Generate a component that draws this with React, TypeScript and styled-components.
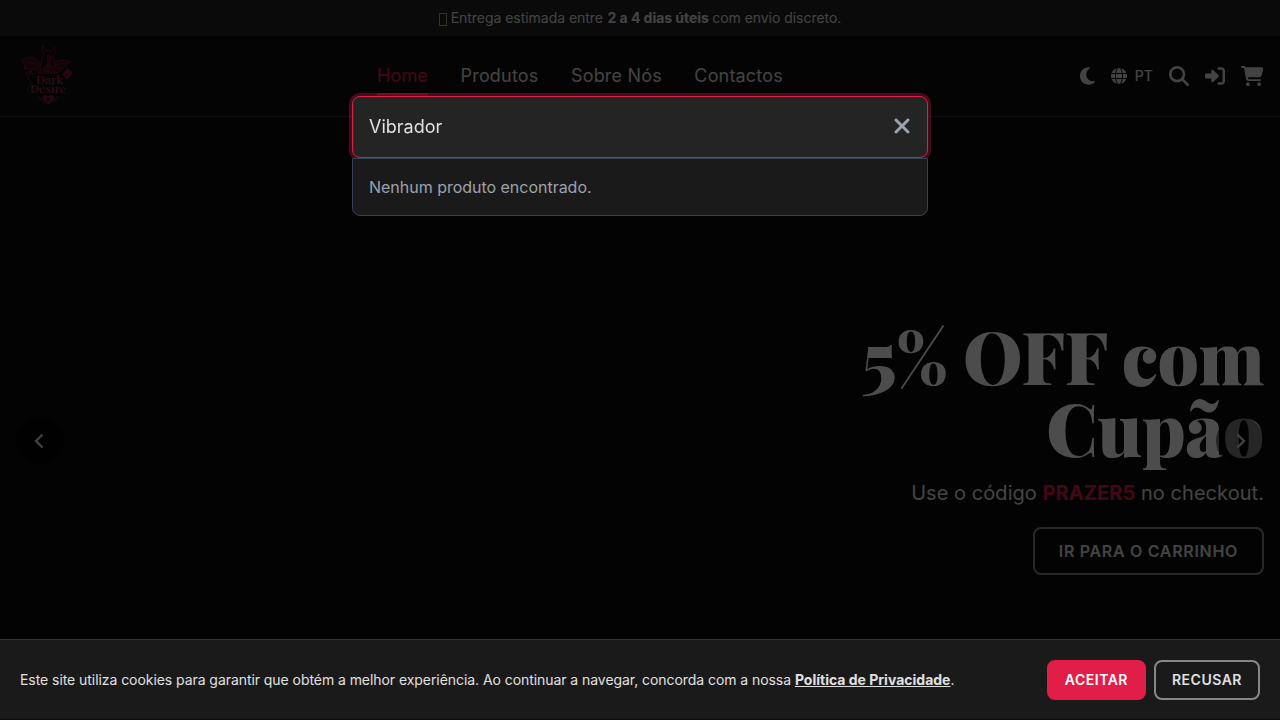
import React from "react";
import styled, { createGlobalStyle } from "styled-components";
import {
  FaMoon,
  FaGlobe,
  FaMagnifyingGlass,
  FaRightToBracket,
  FaCartShopping,
  FaXmark,
} from "react-icons/fa6";

const Global = createGlobalStyle`
  * { box-sizing: border-box; }
  body {
    margin: 0;
    height: 720px;
    overflow: hidden;
    background: #0a0a0a;
    color: #e0e0e0;
    font-family: Inter, "Liberation Sans", sans-serif;
  }
`;

const Announcement = styled.div`
  height: 36px;
  padding-bottom: 1px;
  display: flex;
  align-items: center;
  justify-content: center;
  background: #222;
  font-size: 14px;
  letter-spacing: -0.04px;
  white-space: pre;
  b { margin: 0 -0.5px 0 0.7px; }
`;

const MissingGlyph = styled.span`
  width: 8px;
  height: 13px;
  margin: 3px 4px 0 0;
  border: 1px solid #b0a078;
`;

const Header = styled.header`
  height: 81px;
  padding: 0 16px;
  display: flex;
  align-items: center;
  justify-content: space-between;
  background: #0f0f0f;
  border-bottom: 1px solid #27273c;
`;

const Brand = styled.a`
  display: flex;
  width: 60px;
  height: 60px;
`;

const Nav = styled.nav`
  display: flex;
  gap: 32.5px;
  margin-left: 4px;
`;

const NavLink = styled.a<{ $active?: boolean }>`
  padding: 7px 0 5px;
  font-size: 18px;
  line-height: 24px;
  letter-spacing: 0.18px;
  color: ${(p) => (p.$active ? "#e11d48" : "#e0e0e0")};
  border-bottom: 2px solid ${(p) => (p.$active ? "#e11d48" : "transparent")};
`;

const Tools = styled.div`
  display: flex;
  align-items: center;
  gap: 16px;
  margin-right: 0.6px;
  padding-bottom: 1px;
`;

const Icon = styled.span<{ $width: number; $height: number }>`
  display: flex;
  flex: none;
  width: ${(p) => p.$width}px;
  height: ${(p) => p.$height}px;
  svg { width: 100%; height: 100%; }
`;

const Language = styled.span`
  display: flex;
  align-items: center;
  gap: 8px;
  font-size: 14px;
  font-weight: 500;
`;

const Hero = styled.section`
  position: relative;
  height: 603px;
  padding: 202px 16px 0;
  display: flex;
  flex-direction: column;
  align-items: flex-end;
  text-align: right;
  background: #0a0a0a;
`;

const HeroTitle = styled.h1`
  margin: 0;
  font-family: "Playfair Display", "Liberation Serif", serif;
  font-size: 72px;
  font-weight: 900;
  line-height: 72px;
  letter-spacing: -0.5px;
  color: #fff;
`;

const HeroText = styled.p`
  margin: 14px 0 0;
  font-size: 20px;
  line-height: 32px;
  letter-spacing: 0.05px;
  b { color: #e11d48; }
`;

const OutlineButton = styled.button<{ $small?: boolean }>`
  height: ${(p) => (p.$small ? "40px" : "48px")};
  padding: ${(p) => (p.$small ? "0 16px 1px" : "0 24px")};
  background: transparent;
  border: 2px solid #888;
  border-radius: 8px;
  color: #e0e0e0;
  font: 600 ${(p) => (p.$small ? "14px" : "16px")} Inter, sans-serif;
  letter-spacing: ${(p) => (p.$small ? "0.5px" : "0.69px")};
`;

const HeroButton = styled(OutlineButton)`
  margin-top: 18px;
`;

const Arrow = styled.button<{ $side: "left" | "right" }>`
  position: absolute;
  top: 300px;
  ${(p) => p.$side}: 16px;
  width: 48px;
  height: 48px;
  padding: 0;
  display: flex;
  align-items: center;
  justify-content: center;
  border: 0;
  border-radius: 50%;
  background: rgba(0, 0, 0, 0.5);
`;

const Overlay = styled.div`
  position: fixed;
  inset: 0;
  padding-top: 96px;
  display: flex;
  justify-content: center;
  align-items: flex-start;
  background: rgba(0, 0, 0, 0.7);
`;

const SearchPanel = styled.div`
  width: 576px;
`;

const SearchField = styled.div`
  height: 62px;
  padding: 0 16px 2px;
  display: flex;
  align-items: center;
  justify-content: space-between;
  background: #242424;
  border: 1px solid #e11d48;
  border-radius: 8px;
  box-shadow: 0 0 0 3px rgba(225, 29, 72, 0.3);
  font-size: 18px;
  svg { color: #9ca3af; }
`;

const Results = styled.div`
  position: relative;
  height: 58px;
  padding: 0 16px;
  display: flex;
  align-items: center;
  background: #1a1a1a;
  border: 1px solid #334155;
  border-radius: 0 0 8px 8px;
  color: #9ca3af;
  font-size: 16px;
  letter-spacing: -0.02px;
`;

const CookieBar = styled.aside`
  position: fixed;
  inset: auto 0 0;
  height: 81px;
  padding: 1px 20px 0;
  display: flex;
  align-items: center;
  justify-content: space-between;
  background: #1a1a1a;
  border-top: 1px solid #333;
  border-bottom: 1px solid #160b11;
  font-size: 14px;
`;

const CookieText = styled.span`
  padding-bottom: 2px;
  letter-spacing: -0.06px;
`;

const PolicyLink = styled.a`
  font-weight: 700;
  letter-spacing: 0;
  text-decoration: underline;
`;

const Actions = styled.div`
  display: flex;
  gap: 8px;
`;

const AcceptButton = styled(OutlineButton)`
  background: #e11d48;
  border-color: #e11d48;
  color: #fff;
`;

const Logo = () => (
  <svg width="60" height="60" viewBox="0 0 60 60" fill="none" stroke="#8c1f3d" strokeWidth="0.7">
    <path fill="#3c0d1a" d="M25 18 C20 11 12 9 5 15 C8 17 9 20 9 24 C12 21 14 22 15 26 C17 22 20 22 22 27 L26 27 Z" />
    <path fill="#3c0d1a" d="M37 18 C41 13 48 14 55 16 L50 18 C51 20 49 22 47 22 C46 25 43 25 42 27 L38 27Z" />
    <path d="M25 19 L10 16 M25 20 L15 24 M38 19 L50 17 M38 21 L46 23" strokeWidth="0.4" />
    <path fill="#1c070d" d="M24 27 C26 20 24 14 28 8 C25 6 25 2 27 0 C28 5 31 5 34 5 C37 4 38 3 38 1 C40 5 39 8 36 10 C40 17 37 21 38 27Z" />
    <path fill="#5c1529" stroke="none" d="M32 8 C36 8 36 12 35 15 C34 18 36 20 38 22 C39 25 36 27 32 27 L27 26 C24 24 28 21 31 18 C32 15 30 12 32 8Z" />
    <path d="M31 22 C33 25 36 24 38 22 M32 12 L35 13" stroke="#1c070d" />
    <path d="M18 29 C12 22 6 29 12 29 C17 29 16 25 12 26 M11 30 L13 34" />
    <path fill="#7c1733" d="M51 26 C48 22 54 22 52 25 C57 23 57 29 51 33 C46 29 47 24 51 26Z" />
    <path d="M51 27 L51 30" stroke="#0d0d0d" />
    <g fill="#b32a50" stroke="none" fontFamily="'Playfair Display', 'Liberation Serif', serif" fontWeight="500">
      <text x="20" y="38" fontSize="12" textLength="27" lengthAdjust="spacingAndGlyphs">Dark</text>
      <text x="14" y="47" fontSize="12" textLength="36" lengthAdjust="spacingAndGlyphs">Desire</text>
    </g>
    <path d="M17 36 C13 38 10 44 13 46 M23 50 C23 55 27 57 31 58 C38 56 42 53 42 50 M24 52 L29 56 M40 52 L35 56" />
    <path fill="#7c1733" d="M32 51 C29 48 25 50 28 54 L32 57.5 L37 54 C40 50 35 48 32 51Z" />
    <path d="M32 52 L32 55" stroke="#0d0d0d" strokeWidth="1.4" />
  </svg>
);

const Chevron = ({ d }: { d: string }) => (
  <svg width="16" height="20" viewBox="0 0 16 20" fill="none" stroke="#e0e0e0" strokeWidth="2.3">
    <path d={d} />
  </svg>
);

export default function App() {
  return (
    <>
      <Global />
      <Announcement>
        <MissingGlyph />
        <span>Entrega estimada entre <b>2 a 4 dias úteis</b> com envio discreto.</span>
      </Announcement>
      <Header>
        <Brand><Logo /></Brand>
        <Nav>
          <NavLink $active>Home</NavLink>
          <NavLink>Produtos</NavLink>
          <NavLink>Sobre Nós</NavLink>
          <NavLink>Contactos</NavLink>
        </Nav>
        <Tools>
          <Icon $width={15} $height={20}><FaMoon /></Icon>
          <Language><Icon $width={16} $height={16}><FaGlobe /></Icon>PT</Language>
          <Icon $width={20} $height={20}><FaMagnifyingGlass /></Icon>
          <Icon $width={20} $height={20}><FaRightToBracket /></Icon>
          <Icon $width={22.5} $height={20}><FaCartShopping /></Icon>
        </Tools>
      </Header>
      <Hero>
        <HeroTitle>5% OFF com<br />Cupão</HeroTitle>
        <HeroText>Use o código <b>PRAZER5</b> no checkout.</HeroText>
        <HeroButton>IR PARA O CARRINHO</HeroButton>
        <Arrow $side="left"><Chevron d="M10.5 3.5 L4 10 L10.5 16.5" /></Arrow>
        <Arrow $side="right"><Chevron d="M5.5 3.5 L12 10 L5.5 16.5" /></Arrow>
      </Hero>
      <Overlay>
        <SearchPanel>
          <SearchField>
            Vibrador
            <Icon $width={18} $height={24}><FaXmark /></Icon>
          </SearchField>
          <Results>Nenhum produto encontrado.</Results>
        </SearchPanel>
      </Overlay>
      <CookieBar>
        <CookieText>
          Este site utiliza cookies para garantir que obtém a melhor experiência. Ao continuar a navegar, concorda com a nossa{" "}
          <PolicyLink>Política de Privacidade</PolicyLink>.
        </CookieText>
        <Actions>
          <AcceptButton $small>ACEITAR</AcceptButton>
          <OutlineButton $small>RECUSAR</OutlineButton>
        </Actions>
      </CookieBar>
    </>
  );
}
